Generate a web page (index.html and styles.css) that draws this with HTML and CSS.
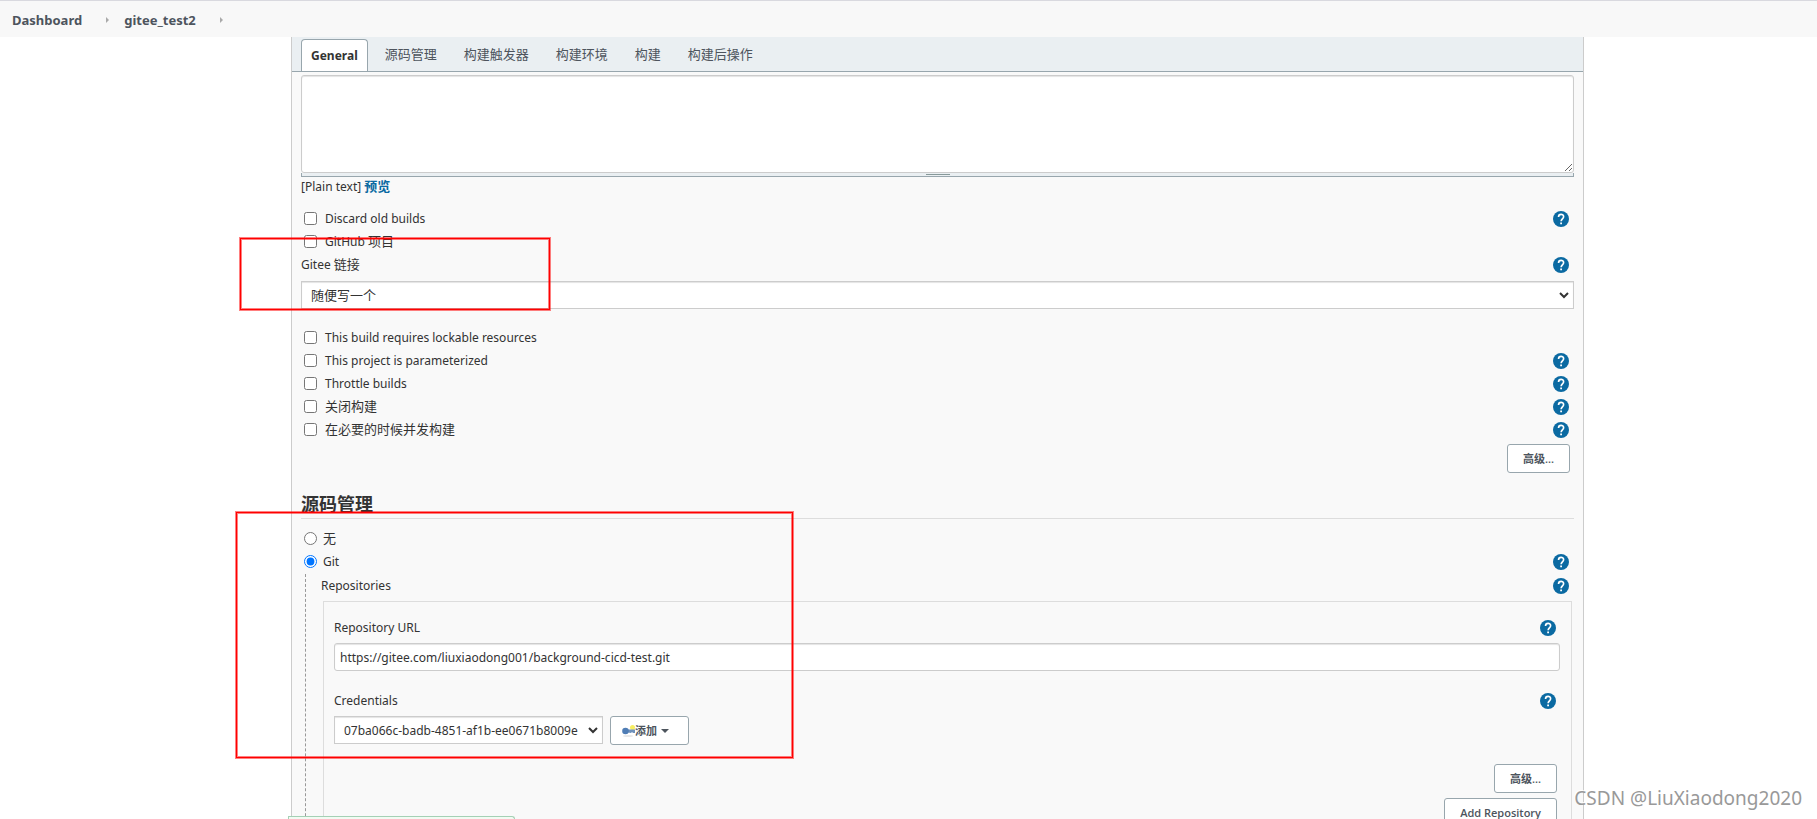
FILE: index.html
```html
<!DOCTYPE html>
<html lang="zh-CN">
<head>
<meta charset="utf-8">
<title>gitee_test2 Config</title>
<link rel="stylesheet" href="styles.css">
</head>
<body>
<svg class="sprite" aria-hidden="true">
  <symbol id="help" viewBox="0 0 24 24"><path fill="#0b6aa2" d="M12 0a12 12 0 1 0 0 24a12 12 0 0 0 0-24z"/><path fill="none" stroke="#fff" stroke-width="2.5" d="M8.3 8.9c0-5.2 7.6-5 7.6-.3 0 3-3.7 3.300-3.700 6.700"/><path fill="#fff" d="M10.800 17.300h2.700v2.700h-2.700z"/></symbol>
</svg>
<nav class="breadcrumbs">
  <a href="#">Dashboard</a><span class="sep"></span><a href="#">gitee_test2</a><span class="sep"></span>
</nav>
<main class="panel">
  <nav class="tabs">
    <a class="tab active" href="#">General</a>
    <a class="tab" href="#">源码管理</a>
    <a class="tab" href="#">构建触发器</a>
    <a class="tab" href="#">构建环境</a>
    <a class="tab" href="#">构建</a>
    <a class="tab" href="#">构建后操作</a>
  </nav>
  <form class="form">
    <textarea class="description" aria-label="描述"></textarea>
    <div class="handle"><span class="grip"></span></div>
    <div class="format">[Plain text] <a href="#">预览</a></div>

    <div class="row"><label><input type="checkbox">Discard old builds</label><button type="button" class="help" aria-label="Help"><svg><use href="#help"/></svg></button></div>
    <div class="row"><label><input type="checkbox">GitHub <span class="cjk">项目</span></label></div>
    <div class="row"><label for="gitee">Gitee <span class="cjk">链接</span></label><button type="button" class="help" aria-label="Help"><svg><use href="#help"/></svg></button></div>
    <div class="select wide"><select class="cjk" id="gitee"><option>随便写一个</option></select><svg class="chevron" viewBox="0 0 10 7"><path d="M1 1l4 4 4-4"/></svg></div>

    <div class="row"><label><input type="checkbox">This build requires lockable resources</label></div>
    <div class="row"><label><input type="checkbox">This project is parameterized</label><button type="button" class="help" aria-label="Help"><svg><use href="#help"/></svg></button></div>
    <div class="row"><label><input type="checkbox">Throttle builds</label><button type="button" class="help" aria-label="Help"><svg><use href="#help"/></svg></button></div>
    <div class="row"><label class="cjk"><input type="checkbox">关闭构建</label><button type="button" class="help" aria-label="Help"><svg><use href="#help"/></svg></button></div>
    <div class="row"><label class="cjk"><input type="checkbox">在必要的时候并发构建</label><button type="button" class="help" aria-label="Help"><svg><use href="#help"/></svg></button></div>
    <div class="actions"><button type="button" class="btn">高级...</button></div>

    <h2>源码管理</h2>
    <div class="row radio"><label class="cjk"><input type="radio" name="scm">无</label></div>
    <div class="row radio"><label><input type="radio" name="scm" checked>Git</label><button type="button" class="help" aria-label="Help"><svg><use href="#help"/></svg></button></div>
    <div class="nested">
      <div class="row"><span>Repositories</span><button type="button" class="help" aria-label="Help"><svg><use href="#help"/></svg></button></div>
      <div class="repo">
        <div class="row"><label for="url">Repository URL</label><button type="button" class="help" aria-label="Help"><svg><use href="#help"/></svg></button></div>
        <input class="text" id="url" type="text" value="https://gitee.com/liuxiaodong001/background-cicd-test.git">
        <div class="row"><label for="cred">Credentials</label><button type="button" class="help" aria-label="Help"><svg><use href="#help"/></svg></button></div>
        <div class="credentials">
          <div class="select"><select id="cred"><option>07ba066c-badb-4851-af1b-ee0671b8009e</option></select><svg class="chevron" viewBox="0 0 10 7"><path d="M1 1l4 4 4-4"/></svg></div>
          <button type="button" class="btn add"><svg class="key" viewBox="0 0 13 12"><ellipse cx="6" cy="11" rx="5" ry="1" fill="#e8e8e8"/><circle cx="10.500" cy="2.500" r="2.500" fill="#f7ee62"/><path d="M4 4.500h9v3.500h-2l-1-1-1 1-3-.500z" fill="#6f91bb"/><circle cx="3.500" cy="6" r="3.300" fill="#4f7db5"/></svg>添加<span class="caret"></span></button>
        </div>
        <div class="repo-actions">
          <button type="button" class="btn">高级...</button>
          <button type="button" class="btn">Add Repository</button>
        </div>
      </div>
    </div>
  </form>
</main>
<div class="mark mark-link"></div>
<div class="mark mark-scm"></div>
<div class="savebar"></div>
<div class="watermark">CSDN @LiuXiaodong2020</div>
</body>
</html>
```
FILE: styles.css
```css
* { box-sizing: border-box; }
body {
  margin: 0;
  height: 100vh;
  overflow: hidden;
  position: relative;
  display: flex;
  flex-direction: column;
  background: #fff;
  color: #333;
  font: 12px/23px "Noto Sans", "Noto Sans CJK SC", sans-serif;
}
a { text-decoration: none; }
button, input, select, textarea { font: inherit; color: inherit; margin: 0; }
.sprite { position: absolute; width: 0; height: 0; }

.breadcrumbs {
  flex: none;
  height: 37px;
  display: flex;
  align-items: center;
  padding: 2px 12px 0;
  background: #f8f8f8;
  border-top: 1px solid #d9d9df;
  font-size: 13px;
  font-weight: 700;
}
.breadcrumbs a { color: #4d545d; }
.sep {
  margin: 0 15px 0 24px;
  border: solid transparent;
  border-width: 3px 0 3px 3px;
  border-left-color: #aaa;
}

.panel {
  flex: 1;
  min-height: 0;
  overflow: hidden;
  margin: 0 233px 0 291px;
  border: solid #ccc;
  border-width: 0 1px;
  background: #f9f9f9;
}
.tabs {
  display: flex;
  align-items: flex-end;
  height: 35px;
  padding: 0 9px;
  background: #eaeff2;
  border-bottom: 1px solid #98a6ad;
}
.tab {
  height: 32px;
  padding: 0 10px;
  margin-right: 7px;
  line-height: 31px;
  font-size: 13px;
  color: #4d545d;
}
.tab.active {
  padding: 0 9px;
  border: 1px solid #98a6ad;
  border-bottom: 0;
  border-radius: 4px 4px 0 0;
  background: #fff;
  color: #333;
  font-size: 12px;
  font-weight: 700;
}

.form { padding: 3px 9px 0; }
.description {
  display: block;
  width: 100%;
  height: 98px;
  border: 1px solid #ccc;
  border-radius: 3px;
  background: #fff;
  box-shadow: inset 0 1px 1px #e4e4e4;
  resize: vertical;
}
.handle {
  height: 4px;
  display: flex;
  justify-content: center;
  background: #eaeff2;
  border: 1px solid #98a6ad;
  border-top: 0;
}
.grip { width: 24px; height: 1px; margin-top: 1px; background: #899; }
.format { height: 30px; line-height: 19px; }
.format a { color: #0b6aa2; font-size: 13px; font-weight: 700; }

.row {
  height: 23px;
  display: flex;
  align-items: center;
  justify-content: space-between;
  padding-right: 5px;
}
.row label { display: flex; align-items: center; white-space: pre; }
.row input { width: 13px; height: 13px; margin: 0 8px 0 3px; }
.row.radio input { margin-right: 6px; }
.row .cjk, .select .cjk { font-size: 13px; }
.help { width: 16px; height: 16px; padding: 0; border: 0; background: none; }
.help svg { display: block; width: 16px; height: 16px; }

.select { position: relative; width: 269px; }
.select select {
  display: block;
  width: 100%;
  height: 28px;
  padding: 1px 20px 0 9px;
  appearance: none;
  border: 1px solid #ccc;
  border-radius: 0;
  background: #fff;
  box-shadow: inset 0 1px 1px #e4e4e4;
}
.select.wide { width: 100%; margin: 5px 0 17px; }
.chevron {
  position: absolute;
  right: 5px;
  top: 11px;
  width: 10px;
  height: 7px;
  fill: none;
  stroke: #333;
  stroke-width: 2;
  pointer-events: none;
}

.btn {
  height: 29px;
  padding: 0 15px;
  border: 1px solid #98a6ad;
  border-radius: 3px;
  background: #fff;
  color: #4d545d;
  font-family: "Open Sans", "Noto Sans CJK SC", sans-serif;
  font-size: 11px;
  font-weight: 600;
  line-height: 27px;
}
.actions { display: flex; justify-content: flex-end; margin-top: 3px; padding-right: 4px; }
h2 {
  margin: 19px 0 8px;
  padding-bottom: 2px;
  border-bottom: 1px solid #ddd;
  font-size: 18px;
  line-height: 24px;
}

.nested { margin: 1px 0 0 4px; padding-left: 15px; border-left: 1px dashed #999; }
.repo {
  height: 260px;
  margin: 4px 2px 0;
  padding: 14px 11px 0 10px;
  border: 1px solid #ddd;
}
.repo .row { padding-right: 4px; }
.text {
  display: block;
  width: 100%;
  height: 28px;
  margin: 4px 0 18px;
  padding: 1px 5px 0;
  border: 1px solid #ccc;
  border-radius: 3px;
  background: #fff;
  box-shadow: inset 0 1px 1px #e4e4e4;
}
.credentials { display: flex; gap: 7px; padding-top: 4px; }
.add { display: flex; align-items: center; width: 79px; padding: 0 11px; }
.key { width: 13px; height: 12px; }
.caret {
  margin-left: 4px;
  border: solid transparent;
  border-width: 4px 4px 0;
  border-top-color: #4d545d;
}
.repo-actions {
  display: flex;
  flex-direction: column;
  align-items: flex-end;
  gap: 5px;
  margin-top: 19px;
  padding-right: 3px;
}

.mark {
  position: absolute;
  border: 1px solid #f00;
  box-shadow: 0 0 0 1px rgba(255, 0, 0, .5), inset 0 0 0 1px rgba(255, 0, 0, .5);
  pointer-events: none;
}
.mark-link { left: 240px; top: 238px; width: 310px; height: 72px; }
.mark-scm { left: 236px; top: 512px; width: 557px; height: 246px; }
.savebar {
  position: absolute;
  left: 288px;
  bottom: 0;
  width: 227px;
  height: 3px;
  border: 1px solid #a5d0b5;
  border-bottom: 0;
  border-radius: 0 4px 0 0;
  background: #f2fbf3;
}
.watermark {
  position: absolute;
  right: 15px;
  bottom: 6px;
  color: #999;
  font-size: 19px;
  line-height: 30px;
  text-shadow: -1px -1px 0 #fff;
}
```
